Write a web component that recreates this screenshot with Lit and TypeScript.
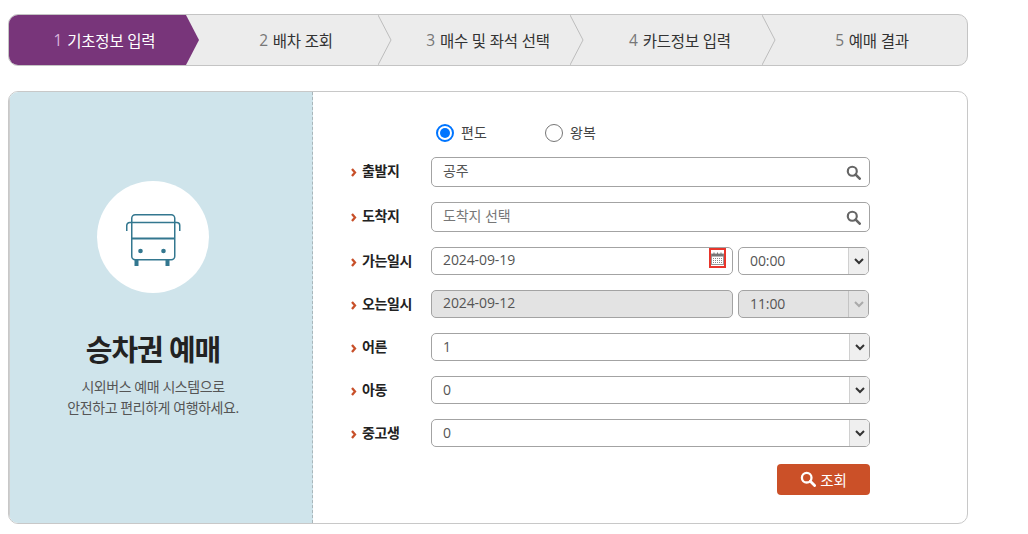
import { LitElement, html, css, svg } from "lit";
import { customElement } from "lit/decorators.js";

const search = (c: string, s: number) => html`<svg class="sr" width=${s} height=${s} viewBox="0 0 16 16" fill="none" stroke=${c}>
  <circle cx="6.7" cy="6.7" r="4.8" stroke-width="2.3"/><path d="M10.3 10.3L14.6 14.6" stroke-width="2.8" stroke-linecap="round"/></svg>`;

const chev = (c: string) => html`<svg width="10" height="7" viewBox="0 0 10 7" fill="none" stroke=${c} stroke-width="2"><path d="M1 1l4 4 4-4"/></svg>`;

@customElement("app-root")
export class AppRoot extends LitElement {
  static styles = css`
    :host { display: block; width: 1028px; height: 534px; box-sizing: border-box; padding: 14px 60px 0 8px; font-family: "Open Sans", "Noto Sans CJK KR", sans-serif; background: #fff; color: #222; overflow: hidden; }
    * { box-sizing: border-box; }
    .steps { display: flex; height: 52px; border: 1px solid #c4c4c4; border-radius: 10px; background: #ececec; overflow: hidden; }
    .step { flex: 0 0 192px; position: relative; display: flex; align-items: center; justify-content: center; font-size: 15.5px; color: #333; padding-left: 28px; letter-spacing: -0.2px; }
    .step:first-child { flex-basis: 177px; color: #fff; padding-left: 14px; }
    .step:last-child { flex: 1; padding-left: 15px; }
    .step b { font-weight: 400; color: #777; margin-right: 5px; }
    .step:first-child b { color: #d9b4dc; }
    .arrow { position: absolute; right: -14px; top: 0; width: 14px; height: 50px; z-index: 1; }
    .fill { position: absolute; inset: 0; background: #78357a; z-index: 0; }
    .step span, .step b { position: relative; }
    .card { margin-top: 25px; height: 433px; border: 1px solid #c8c8c8; border-radius: 10px; display: flex; overflow: hidden; }
    .side { width: 304px; background: #cfe4eb; border-right: 1px dashed #a9b6ba; border-left: 1px solid #cfcfcf; display: flex; flex-direction: column; align-items: center; padding: 89px 16px 0 0; }
    .circle { width: 112px; height: 112px; border-radius: 50%; background: #fff; display: flex; align-items: center; justify-content: center; }
    .circle svg { margin-top: 6px; }
    h1 { margin: 32px 0 0; font-size: 29px; line-height: 50px; font-weight: 700; color: #222; letter-spacing: -1.1px; white-space: nowrap; }
    .side p { margin: 1px 0 0; font-size: 14px; line-height: 21px; text-align: center; color: #555; letter-spacing: -0.44px; white-space: nowrap; }
    .form { flex: 1; padding: 28px 0 0 38px; display: flex; flex-direction: column; }
    .radios { display: flex; height: 26px; padding-left: 85px; align-items: center; font-size: 14px; color: #444; }
    .radio { display: flex; align-items: center; gap: 7px; width: 109px; }
    .radio span:last-child { margin-top: -2px; }
    .dot { width: 18px; height: 18px; border-radius: 50%; border: 1px solid #767676; background: #fff; display: block; }
    .dot.on { border: 2px solid #0075ff; display: flex; align-items: center; justify-content: center; }
    .dot.on::after { content: ""; width: 10px; height: 10px; border-radius: 50%; background: #0075ff; }
    .row { display: flex; align-items: center; margin-top: 15px; height: 28px; width: 519px; }
    .row.first { margin-top: 11px; }
    .row.tall { height: 30px; }
    .label { width: 80px; display: flex; align-items: center; gap: 5px; font-size: 14px; font-weight: 700; color: #222; letter-spacing: -0.4px; line-height: 20px; }
    .row.tall .label { padding-bottom: 2px; }
    .label svg { margin-top: 2px; }
    .box { flex: 1; height: 100%; border: 1px solid #a3a3a3; border-radius: 5px; display: flex; align-items: center; padding: 0 0 4px 11px; font-size: 14px; color: #555; background: #fff; position: relative; min-width: 0; letter-spacing: -0.1px; }
    .box.ph { color: #777; }
    .box .sr { position: absolute; right: 8px; top: 7px; }
    .box.off { background: #e3e3e3; color: #555; }
    .date { flex: 0 0 302px; }
    .sel { padding: 0 0 1px 11px; justify-content: space-between; overflow: hidden; }
    .time { flex: 0 0 131px; margin-left: 5px; }
    .caret { align-self: stretch; margin-bottom: -1px; width: 20px; border-left: 1px solid #d0d0d0; background: #efefef; display: flex; align-items: center; justify-content: center; }
    .off .caret { background: #e3e3e3; border-left-color: #c4c4c4; }
    .cal { position: absolute; right: 6px; top: 0; width: 17px; height: 20px; border: 2px solid #e8352b; display: flex; align-items: center; justify-content: center; background: #fff; }
    .actions { width: 519px; display: flex; justify-content: flex-end; margin-top: 17px; }
    .btn { width: 93px; height: 31px; border-radius: 4px; background: #cb5028; color: #fff; font-size: 14.5px; display: flex; align-items: center; justify-content: center; gap: 4px; border: 0; font-family: inherit; padding: 0 0 1px 0; }
  `;

  private label(t: string) {
    return html`<div class="label"><svg width="6" height="9" viewBox="0 0 6 9" fill="none" stroke="#c8502a" stroke-width="2.3"><path d="M1 1l3 3.5L1 8"/></svg>${t}</div>`;
  }

  private sel(v: string, extra = "") {
    return html`<div class="box sel ${extra}">${v}<div class="caret">${chev(extra.includes("off") ? "#aaa" : "#333")}</div></div>`;
  }

  render() {
    const steps = [["1", "기초정보 입력"], ["2", "배차 조회"], ["3", "매수 및 좌석 선택"], ["4", "카드정보 입력"], ["5", "예매 결과"]];
    return html`
      <div class="steps">
        ${steps.map(([n, t], i) => html`<div class="step" style="z-index:${5 - i}">
          ${i === 0 ? html`<div class="fill"></div>` : ""}
          <b>${n}</b><span>${t}</span>
          ${i < 4 ? html`<svg class="arrow" viewBox="0 0 14 50" preserveAspectRatio="none">
            ${i === 0
              ? svg`<path d="M0 0L13 25L0 50Z" fill="#78357a"/>`
              : svg`<path d="M0 0L13 25L0 50" fill="#ececec" stroke="#bdbdbd" stroke-width="1"/>`}
          </svg>` : ""}
        </div>`)}
      </div>
      <div class="card">
        <div class="side">
          <div class="circle">
            <svg width="56" height="52" viewBox="0 0 56 52" fill="none" stroke="#33778f" stroke-width="1.5">
              <rect x="6.75" y="0.75" width="43" height="45" rx="3.5"/>
              <path d="M1.75 17v-5.5a3 3 0 0 1 3-3h47a3 3 0 0 1 3 3V17"/>
              <path d="M6.75 24.5h43" stroke-width="2"/>
              <circle cx="15.5" cy="37" r="2.3" fill="#33778f" stroke="none"/>
              <circle cx="38.5" cy="37" r="2.3" fill="#33778f" stroke="none"/>
              <rect x="9.5" y="46" width="4" height="6" fill="#33778f" stroke="none"/>
              <rect x="40.5" y="46" width="4" height="6" fill="#33778f" stroke="none"/>
            </svg>
          </div>
          <h1>승차권 예매</h1>
          <p>시외버스 예매 시스템으로<br />안전하고 편리하게 여행하세요.</p>
        </div>
        <div class="form">
          <div class="radios">
            <label class="radio"><span class="dot on"></span><span>편도</span></label>
            <label class="radio"><span class="dot"></span><span>왕복</span></label>
          </div>
          <div class="row tall first">${this.label("출발지")}<div class="box">공주${search("#666", 15)}</div></div>
          <div class="row tall">${this.label("도착지")}<div class="box ph">도착지 선택${search("#666", 15)}</div></div>
          <div class="row">${this.label("가는일시")}<div class="box date">2024-09-19<div class="cal">
            <svg width="13" height="13" viewBox="0 0 13 13"><rect x="0.5" y="2" width="12" height="10.5" fill="#fff" stroke="#999"/><rect x="0.5" y="2" width="12" height="2.5" fill="#777"/><path d="M3 0.5v2M6.5 0.5v2M10 0.5v2" stroke="#777"/><path d="M2 6.5h9M2 8.5h9M2 10.5h9" stroke="#888" stroke-dasharray="1 1"/></svg>
          </div></div>${this.sel("00:00", "time")}</div>
          <div class="row">${this.label("오는일시")}<div class="box date off">2024-09-12</div>${this.sel("11:00", "time off")}</div>
          <div class="row">${this.label("어른")}${this.sel("1")}</div>
          <div class="row">${this.label("아동")}${this.sel("0")}</div>
          <div class="row">${this.label("중고생")}${this.sel("0")}</div>
          <div class="actions"><button class="btn">${search("#fff", 16)}조회</button></div>
        </div>
      </div>
    `;
  }
}
